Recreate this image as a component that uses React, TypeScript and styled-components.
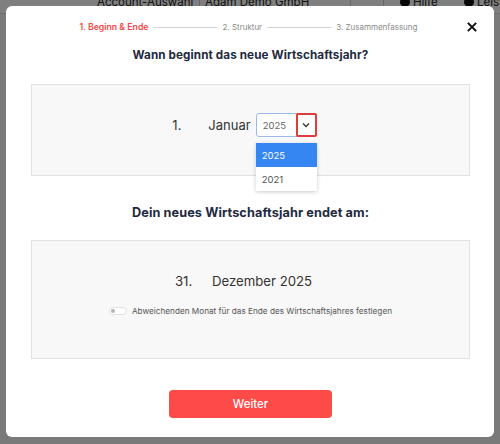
import React from 'react';
import styled, { createGlobalStyle } from 'styled-components';

const GlobalStyle = createGlobalStyle`
  html, body {
    margin: 0;
    padding: 0;
    width: 500px;
    height: 444px;
    overflow: hidden;
    font-family: Inter, "Open Sans", sans-serif;
  }
`;

const Page = styled.div`
  position: relative;
  width: 500px;
  height: 444px;
  background: #f4f4f4;
  overflow: hidden;
`;

const AppHeader = styled.header`
  position: relative;
  height: 20px;
  margin-top: -7px;
  background: #ffffff;
  border-bottom: 1px solid #dddddd;
  font-size: 11.5px;
  line-height: 14px;
  color: #222;
  white-space: nowrap;
`;

const HeaderItem = styled.span<{ $left: number }>`
  position: absolute;
  top: 2px;
  left: ${(p) => p.$left}px;
  display: inline-flex;
  align-items: center;
  gap: 3px;
`;

const HeaderDivider = styled.span<{ $left: number }>`
  position: absolute;
  left: ${(p) => p.$left}px;
  top: 0;
  width: 1px;
  height: 16px;
  background: #ccc;
`;

const Dot = styled.span`
  display: inline-block;
  width: 10px;
  height: 10px;
  border-radius: 50%;
  background: #111;
`;

const Overlay = styled.div`
  position: absolute;
  inset: 0;
  background: rgba(0, 0, 0, 0.5);
  display: flex;
  justify-content: center;
  padding-top: 6px;
`;

const Modal = styled.div`
  position: relative;
  width: 488px;
  height: 431px;
  background: #ffffff;
  border-radius: 6px;
  box-sizing: border-box;
  padding: 15px 24px 0 25px;
  display: flex;
  flex-direction: column;
  align-items: stretch;
`;

const Stepper = styled.div`
  display: flex;
  align-items: center;
  justify-content: center;
  gap: 5px;
  height: 12px;
  margin-right: 4px;
`;

const Step = styled.span<{ $active?: boolean }>`
  color: ${(p) => (p.$active ? '#f04848' : '#8a8a8a')};
  font-weight: ${(p) => (p.$active ? 600 : 400)};
  font-size: ${(p) => (p.$active ? '8.7px' : '8px')};
  white-space: nowrap;
`;

const StepLine = styled.span`
  width: 64px;
  height: 1px;
  background: #d6d6d6;
`;

const Close = styled.button`
  position: absolute;
  top: 14px;
  right: 15px;
  border: none;
  background: none;
  padding: 0;
  width: 14px;
  height: 14px;
  cursor: pointer;
`;

const Title = styled.h2<{ $mt: number; $size: number }>`
  margin: ${(p) => p.$mt}px 0 0;
  text-align: center;
  font-size: ${(p) => p.$size}px;
  font-weight: 700;
  color: #1e2a40;
  letter-spacing: 0.1px;
  line-height: 16px;
`;

const Panel = styled.div<{ $h: number; $mt: number }>`
  margin-top: ${(p) => p.$mt}px;
  height: ${(p) => p.$h}px;
  padding-bottom: 10px;
  background: #f8f8f8;
  border: 1px solid #e2e2e2;
  box-sizing: border-box;
  display: flex;
  flex-direction: column;
  align-items: center;
  justify-content: center;
`;

const DateRow = styled.div`
  display: flex;
  align-items: center;
  color: #333;
  font-size: 13px;
  margin-right: 12px;
`;

const DayLabel = styled.span<{ $w: number }>`
  width: ${(p) => p.$w}px;
`;

const SelectWrap = styled.div`
  position: relative;
  margin-left: 5px;
`;

const SelectBox = styled.div`
  display: flex;
  width: 61px;
  height: 24px;
  box-sizing: border-box;
  border: 1px solid #9cb8e6;
  border-radius: 3px;
  background: #fff;
`;

const SelectValue = styled.span`
  flex: 1;
  display: flex;
  align-items: center;
  padding-left: 6px;
  font-size: 9.5px;
  color: #666;
`;

const SelectButton = styled.span`
  width: 21px;
  margin: -1px -1px -1px 0;
  border: 2px solid #e23b3b;
  border-radius: 2px;
  display: flex;
  align-items: center;
  justify-content: center;
  box-sizing: border-box;
`;

const Menu = styled.ul`
  position: absolute;
  top: 30px;
  left: 0;
  width: 61px;
  margin: 0;
  padding: 0;
  list-style: none;
  background: #fff;
  box-shadow: 0 1px 4px rgba(0, 0, 0, 0.2);
`;

const Option = styled.li<{ $selected?: boolean }>`
  height: 24px;
  display: flex;
  align-items: center;
  padding-left: 6px;
  font-size: 9.5px;
  color: ${(p) => (p.$selected ? '#fff' : '#555')};
  background: ${(p) => (p.$selected ? '#3586f2' : '#fff')};
`;

const EndRow = styled(DateRow)`
  font-size: 13.2px;
  margin-right: 14px;
`;

const ToggleRow = styled.label`
  display: flex;
  align-items: center;
  gap: 5px;
  margin-top: 17px;
  font-size: 8.2px;
  color: #555;
`;

const Toggle = styled.span`
  position: relative;
  width: 18px;
  height: 8px;
  border-radius: 4px;
  background: #fff;
  border: 1px solid #e2e2e2;
  box-sizing: border-box;
  &::after {
    content: '';
    position: absolute;
    left: 1px;
    top: 1px;
    width: 4px;
    height: 4px;
    border-radius: 50%;
    background: #b5b5b5;
  }
`;

const Footer = styled.div`
  margin-top: 31px;
  display: flex;
  justify-content: center;
`;

const Button = styled.button`
  width: 163px;
  height: 28px;
  border: none;
  border-radius: 4px;
  background: #ff4a4a;
  color: #fff;
  font-family: inherit;
  font-size: 11.5px;
  font-weight: 500;
  cursor: pointer;
`;

const App = () => (
  <Page>
    <GlobalStyle />
    <AppHeader>
      <HeaderItem $left={97}>Account-Auswahl</HeaderItem>
      <HeaderDivider $left={199} />
      <HeaderItem $left={205}>Adam Demo GmbH</HeaderItem>
      <HeaderDivider $left={350} />
      <HeaderDivider $left={383} />
      <HeaderItem $left={400}>
        <Dot /> Hilfe
      </HeaderItem>
      <HeaderItem $left={464}>
        <Dot /> Leistungen
      </HeaderItem>
    </AppHeader>
    <Overlay>
      <Modal>
        <Stepper>
          <Step $active>1. Beginn &amp; Ende</Step>
          <StepLine />
          <Step>2. Struktur</Step>
          <StepLine />
          <Step>3. Zusammenfassung</Step>
        </Stepper>
        <Close aria-label="Schließen">
          <svg width="14" height="14" viewBox="0 0 14 14">
            <path d="M3.5 3.5 L10.5 10.5 M10.5 3.5 L3.5 10.5" stroke="#111" strokeWidth="1.9" strokeLinecap="square" />
          </svg>
        </Close>

        <Title $mt={14} $size={11.7}>Wann beginnt das neue Wirtschaftsjahr?</Title>
        <Panel $mt={21} $h={92}>
          <DateRow>
            <DayLabel $w={36}>1.</DayLabel>
            <span>Januar</span>
            <SelectWrap>
              <SelectBox>
                <SelectValue>2025</SelectValue>
                <SelectButton>
                  <svg width="8" height="6" viewBox="0 0 8 6">
                    <path d="M1 1.5 L4 4.5 L7 1.5" fill="none" stroke="#333" strokeWidth="1.3" />
                  </svg>
                </SelectButton>
              </SelectBox>
              <Menu>
                <Option $selected>2025</Option>
                <Option>2021</Option>
              </Menu>
            </SelectWrap>
          </DateRow>
        </Panel>

        <Title $mt={29} $size={12.7}>Dein neues Wirtschaftsjahr endet am:</Title>
        <Panel $mt={19} $h={119}>
          <EndRow>
            <DayLabel $w={37}>31.</DayLabel>
            <span>Dezember 2025</span>
          </EndRow>
          <ToggleRow>
            <Toggle />
            Abweichenden Monat für das Ende des Wirtschaftsjahres festlegen
          </ToggleRow>
        </Panel>

        <Footer>
          <Button>Weiter</Button>
        </Footer>
      </Modal>
    </Overlay>
  </Page>
);

export default App;
